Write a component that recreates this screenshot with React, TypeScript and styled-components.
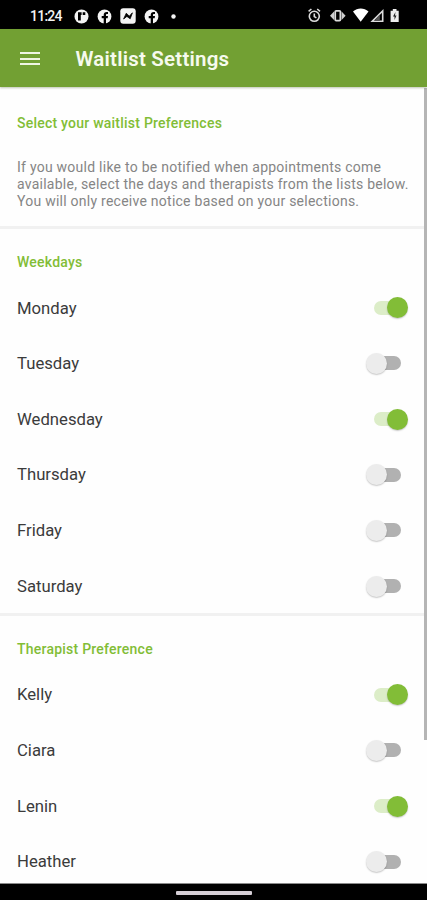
import React from "react";
import styled, { createGlobalStyle } from "styled-components";

const GlobalStyle = createGlobalStyle`
  html, body { margin: 0; padding: 0; background: #fefefe; overflow: hidden; }
  * { box-sizing: border-box; }
`;

const Screen = styled.div`
  position: relative;
  display: flex;
  flex-direction: column;
  width: 427px;
  height: 900px;
  overflow: hidden;
  background: #fefefe;
  font-family: Roboto, "Liberation Sans", sans-serif;
`;

const StatusBar = styled.header`
  display: flex;
  flex: none;
  align-items: center;
  justify-content: space-between;
  height: 29px;
  padding: 3px 27px 0 30px;
  background: #000;
  color: #f4f4f4;
`;

const StatusGroup = styled.div`
  display: flex;
  align-items: center;
  svg { display: block; }
`;

const Clock = styled.span`
  width: 43.5px;
  font-size: 14px;
  font-weight: 500;
  line-height: 16px;
  letter-spacing: -0.75px;
  white-space: nowrap;
`;

const AppBar = styled.div`
  display: flex;
  flex: none;
  align-items: center;
  gap: 36px;
  height: 58px;
  padding: 2px 20px 0;
  background: #72a033;
  box-shadow: 0 1px 2px rgba(70, 90, 40, 0.35);
  z-index: 1;
`;

const MenuButton = styled.button`
  display: flex;
  flex-direction: column;
  gap: 3.5px;
  width: 19.5px;
  padding: 0;
  margin-top: -1px;
  border: 0;
  background: none;
`;

const MenuLine = styled.span`
  height: 2px;
  background: #eef5e2;
`;

const Title = styled.h1`
  margin: 0;
  color: #f6faee;
  font-size: 20.5px;
  font-weight: 600;
  line-height: 24px;
  letter-spacing: 0.2px;
  white-space: nowrap;
`;

const Content = styled.main`
  flex: 1;
  min-height: 0;
  overflow: hidden;
`;

const Section = styled.section<{ $height?: number }>`
  height: ${(p) => (p.$height ? `${p.$height}px` : "auto")};
  border-bottom: 3px solid #f1f1f1;
`;

const SectionTitle = styled.h2<{ $offset?: number }>`
  height: 51px;
  margin: 0;
  padding: ${(p) => p.$offset ?? 23}px 17px 0;
  color: #82bd36;
  font-size: 14px;
  font-weight: 500;
  line-height: 20px;
  letter-spacing: 0.23px;
  white-space: nowrap;
`;

const Description = styled.p`
  margin: 0;
  padding: 21px 0 0 17px;
  color: #858585;
  font-size: 14px;
  line-height: 17px;
  letter-spacing: 0.25px;
  white-space: nowrap;
`;

const Rows = styled.div`
  margin-bottom: -1px;
`;

const Row = styled.label`
  display: flex;
  align-items: center;
  justify-content: space-between;
  height: 55.67px;
  padding: 0 19px 0 17px;
`;

const RowLabel = styled.span`
  padding-top: 1.4px;
  color: #3b3b3b;
  font-size: 16.7px;
  line-height: 22px;
`;

const Switch = styled.span<{ $on: boolean }>`
  position: relative;
  display: flex;
  align-items: center;
  justify-content: ${(p) => (p.$on ? "flex-end" : "flex-start")};
  width: 42.5px;
  height: 22px;
`;

const Track = styled.span<{ $on: boolean }>`
  position: absolute;
  left: 8px;
  top: 4px;
  width: 27px;
  height: 14px;
  border-radius: 7px;
  background: ${(p) => (p.$on ? "#dcedc8" : "#b1b1b1")};
`;

const Thumb = styled.span<{ $on: boolean }>`
  position: relative;
  width: 21px;
  height: 21px;
  border-radius: 50%;
  background: ${(p) => (p.$on ? "#82bd37" : "#ececec")};
  box-shadow: 0 1px 1.5px rgba(0, 0, 0, 0.22);
`;

const ScrollThumb = styled.div`
  position: absolute;
  top: 88px;
  right: 0;
  width: 3px;
  height: 652px;
  background: #b5b5b5;
`;

const NavBar = styled.footer`
  display: flex;
  flex: none;
  justify-content: center;
  height: 17px;
  padding-top: 7px;
  border-top: 1px solid #8a8a8a;
  background: #000;
`;

const HomePill = styled.span`
  width: 76px;
  height: 4px;
  border-radius: 1px;
  background: #d5ced5;
`;

const FacebookIcon = () => (
  <svg width="15" height="15" viewBox="0 0 15 15">
    <circle cx="7.5" cy="7.5" r="6.9" fill="#f4f4f4" />
    <path d="M6.7 15V9.2H4.7V7.1h2V6C6.7 4 7.8 3 9.7 3H11v2h-1c-.8 0-1 .4-1 1.1v1H11l-.3 2.1H9V15z" fill="#000" />
  </svg>
);

const LeftIcons = styled(StatusGroup)`
  gap: 8px;
`;

const PageIcon = () => (
  <svg width="15" height="15" viewBox="0 0 15 15">
    <circle cx="7.5" cy="7.5" r="7" fill="#f4f4f4" />
    <path d="M4 3.3h3.6v2.8h-.8v5.4H4zM8.7 3.3h2.6v2.8H8.7z" fill="#000" />
  </svg>
);

const NewsIcon = () => (
  <svg width="16" height="16" viewBox="0 0 16 16">
    <rect x="0.3" y="0.2" width="15.4" height="15.6" rx="3" fill="#f4f4f4" />
    <path d="M3.6 11 6.3 5.2l3 3 3.1-3.4-2.2 6-3.3-2.4z" fill="#000" stroke="#000" strokeWidth="0.8" />
  </svg>
);

const RightIcons = () => (
  <svg width="92" height="16" viewBox="308 8 92 16">
    <g fill="none" stroke="#dcdcdc" strokeWidth="1.6">
      <circle cx="314.3" cy="16.3" r="5" />
      <path d="M308.6 11.3 311.4 9M320 11.3 317.2 9M314.3 13.4v3.2l2.1 1.3" />
      <rect x="335.2" y="10.8" width="5.2" height="9.8" rx="1" strokeWidth="1.8" />
      <path d="M382.7 11v10.2h-10.4z" />
    </g>
    <path d="M334 11.5v8.4l-4-4.2zM341.6 11.5v8.4l4-4.2z" fill="#cfcfcf" />
    <path d="M353 11.5c4.5-4 11-4 15.5 0L360.7 21.8z" fill="#fff" />
    <path d="M379.8 14.5 374 21h5.8z" fill="#555" />
    <path d="M392.8 9h3.7v1.7h2.2V22h-8.1V10.7h2.2z" fill="#eee" />
    <path d="m395.5 12-2.5 4.5h1.5V20l2-4.6H395z" fill="#222" />
  </svg>
);

const weekdays = [
  { name: "Monday", on: true },
  { name: "Tuesday", on: false },
  { name: "Wednesday", on: true },
  { name: "Thursday", on: false },
  { name: "Friday", on: false },
  { name: "Saturday", on: false },
];

const therapists = [
  { name: "Kelly", on: true },
  { name: "Ciara", on: false },
  { name: "Lenin", on: true },
  { name: "Heather", on: false },
];

function PreferenceRow({ name, on }: { name: string; on: boolean }) {
  return (
    <Row>
      <RowLabel>{name}</RowLabel>
      <Switch $on={on} role="switch" aria-checked={on} aria-label={name}>
        <Track $on={on} />
        <Thumb $on={on} />
      </Switch>
    </Row>
  );
}

export default function App() {
  return (
    <Screen>
      <GlobalStyle />
      <StatusBar>
        <StatusGroup>
          <Clock>11:24</Clock>
          <LeftIcons>
            <PageIcon />
            <FacebookIcon />
            <NewsIcon />
            <FacebookIcon />
            <svg width="16" height="15" viewBox="0 0 16 15">
              <circle cx="6.5" cy="7.5" r="2.2" fill="#f4f4f4" />
            </svg>
          </LeftIcons>
        </StatusGroup>
        <RightIcons />
      </StatusBar>
      <AppBar>
        <MenuButton aria-label="Menu">
          <MenuLine />
          <MenuLine />
          <MenuLine />
        </MenuButton>
        <Title>Waitlist Settings</Title>
      </AppBar>
      <Content>
        <Section $height={142}>
          <SectionTitle $offset={26}>Select your waitlist Preferences</SectionTitle>
          <Description>
            If you would like to be notified when appointments come
            <br />
            available, select the days and therapists from the lists below.
            <br />
            You will only receive notice based on your selections.
          </Description>
        </Section>
        <Section>
          <SectionTitle>Weekdays</SectionTitle>
          <Rows>
            {weekdays.map((d) => (
              <PreferenceRow key={d.name} {...d} />
            ))}
          </Rows>
        </Section>
        <Section>
          <SectionTitle>Therapist Preference</SectionTitle>
          <Rows>
            {therapists.map((t) => (
              <PreferenceRow key={t.name} {...t} />
            ))}
          </Rows>
        </Section>
      </Content>
      <NavBar>
        <HomePill />
      </NavBar>
      <ScrollThumb />
    </Screen>
  );
}
